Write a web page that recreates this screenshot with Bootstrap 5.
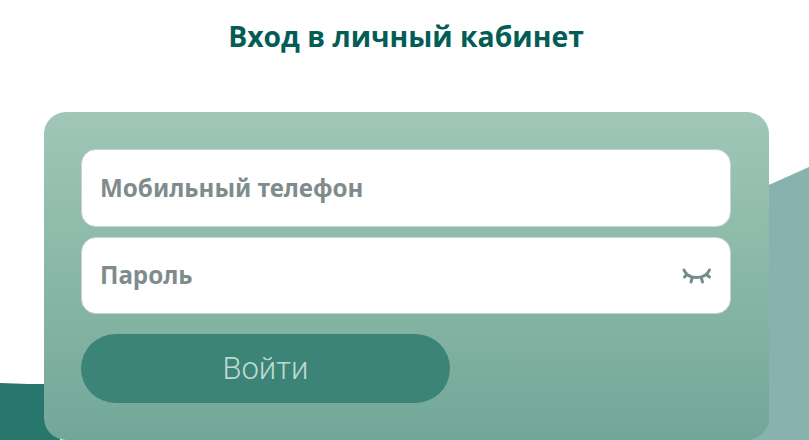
<!DOCTYPE html>
<html lang="ru">
<head>
<meta charset="utf-8">
<title>Вход</title>
<link href="https://cdn.jsdelivr.net/npm/bootstrap@5.3.0/dist/css/bootstrap.min.css" rel="stylesheet">
<style>
html,body{height:440px;overflow:hidden;background:#fff}
.page-wrap{position:relative;height:440px;overflow:hidden;padding-top:17px}
.wave-bg{position:absolute;left:0;top:0;width:809px;height:440px}
.login-title{position:relative;font:700 28.3px/38px "Open Sans",sans-serif;color:#045c56;margin:0 0 57px;text-align:center;padding-left:3px}
.login-card{position:relative;margin-left:44px;width:725px;height:328px;padding:37px 38px 0 37px;border-radius:22px;background:linear-gradient(180deg,#a0c7b7 0%,#72a797 100%)}
.field-box{height:78px;background:#fff;border:1px solid #c9d2d0;border-radius:15px;padding:0 18px;font:700 24.2px/1 "Noto Sans",sans-serif;color:#7f8c8d}
.field-box.second{height:77px;margin-top:10px}
.eye-icon{margin-top:2px}
.enter-btn{width:369px;height:69px;margin-top:20px;border:0;border-radius:35px;background:#3d8478;color:#bcdad0;font:300 31px/1 Roboto,sans-serif}
</style>
</head>
<body>
<div class="page-wrap">
  <svg class="wave-bg" viewBox="0 0 809 440" aria-hidden="true">
    <path d="M0 383C20 384 35 384 60 384V440H0Z" fill="#27776d"/>
    <path d="M740 198L809 167V440H740Z" fill="#87b2ad"/>
  </svg>
  <h1 class="login-title">Вход в личный кабинет</h1>
  <form class="login-card">
    <div class="field-box d-flex align-items-center">Мобильный телефон</div>
    <div class="field-box second d-flex align-items-center justify-content-between">
      <span>Пароль</span>
      <svg class="eye-icon" width="30" height="18" viewBox="0 0 30 18" fill="none" stroke="#768a8c" stroke-width="3" stroke-linecap="round">
        <path d="M2 2C6 12 23 12 27.500 2"/>
        <path d="M4.500 7L2.500 9M10 10.500L9 14M19.500 10.500L20.500 14M25 7L27.500 9"/>
      </svg>
    </div>
    <button type="button" class="enter-btn d-block">Войти</button>
  </form>
</div>
<script src="https://cdn.jsdelivr.net/npm/bootstrap@5.3.0/dist/js/bootstrap.bundle.min.js"></script>
</body>
</html>
